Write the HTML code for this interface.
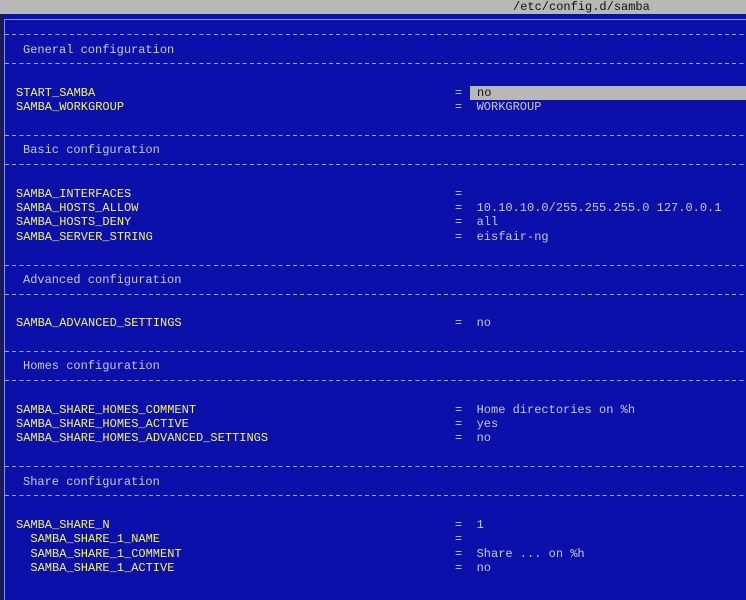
<!DOCTYPE html>
<html><head><meta charset="utf-8"><style>
html,body{margin:0;padding:0}
body{width:746px;height:600px;background:#0c10aa;position:relative;overflow:hidden;font-family:"Liberation Mono",monospace;font-size:12px}
.top{position:absolute;left:0;top:0;width:746px;height:14px;background:#b8b8b8}
.lb{position:absolute;left:0;top:14px;width:2px;height:586px;background:#202030}
.fv{position:absolute;left:4px;top:19px;width:1px;height:581px;background:#8890d8}
.fh{position:absolute;left:4px;top:19px;width:742px;height:1px;background:#8890d8}
.t{position:absolute;white-space:pre;line-height:14.4px;height:14.4px;margin-top:1px}
.y{color:#f4f468}.w{color:#c8c8d0}.k{color:#101010}
.d{position:absolute;left:5px;width:741px;height:1px;background:repeating-linear-gradient(90deg,#a0a4dc 0 4px,transparent 4px 7.2px)}
.hl{position:absolute;left:470px;width:276px;height:14.4px;background:#b8b8b8}
</style></head><body>
<div class="top"></div>
<div class="t k" style="left:513px;top:-1.5px">/etc/config.d/samba</div>
<div class="lb"></div><div class="fv"></div><div class="fh"></div>
<div class="hl" style="top:85.5px"></div>
<div class="d" style="top:34px"></div>
<div class="d" style="top:63px"></div>
<div class="d" style="top:135px"></div>
<div class="d" style="top:164px"></div>
<div class="d" style="top:265px"></div>
<div class="d" style="top:294px"></div>
<div class="d" style="top:351px"></div>
<div class="d" style="top:380px"></div>
<div class="d" style="top:466px"></div>
<div class="d" style="top:495px"></div>
<div class="t w" style="left:23px;top:41.6px">General configuration</div>
<div class="t w" style="left:23px;top:142.4px">Basic configuration</div>
<div class="t w" style="left:23px;top:272px">Advanced configuration</div>
<div class="t w" style="left:23px;top:358.4px">Homes configuration</div>
<div class="t w" style="left:23px;top:473.6px">Share configuration</div>

<div class="t y" style="left:16px;top:84.8px">START_SAMBA</div>
<div class="t y" style="left:16px;top:99.2px">SAMBA_WORKGROUP</div>
<div class="t y" style="left:16px;top:185.6px">SAMBA_INTERFACES</div>
<div class="t y" style="left:16px;top:200px">SAMBA_HOSTS_ALLOW</div>
<div class="t y" style="left:16px;top:214.4px">SAMBA_HOSTS_DENY</div>
<div class="t y" style="left:16px;top:228.8px">SAMBA_SERVER_STRING</div>
<div class="t y" style="left:16px;top:315.2px">SAMBA_ADVANCED_SETTINGS</div>
<div class="t y" style="left:16px;top:401.6px">SAMBA_SHARE_HOMES_COMMENT</div>
<div class="t y" style="left:16px;top:416px">SAMBA_SHARE_HOMES_ACTIVE</div>
<div class="t y" style="left:16px;top:430.4px">SAMBA_SHARE_HOMES_ADVANCED_SETTINGS</div>
<div class="t y" style="left:16px;top:516.8px">SAMBA_SHARE_N</div>
<div class="t y" style="left:30.4px;top:531.2px">SAMBA_SHARE_1_NAME</div>
<div class="t y" style="left:30.4px;top:545.6px">SAMBA_SHARE_1_COMMENT</div>
<div class="t y" style="left:30.4px;top:560px">SAMBA_SHARE_1_ACTIVE</div>

<div class="t w" style="left:455px;top:84.8px">=</div><div class="t k" style="left:477px;top:84.8px">no</div>
<div class="t w" style="left:455px;top:99.2px">=  WORKGROUP</div>
<div class="t w" style="left:455px;top:185.6px">=</div>
<div class="t w" style="left:455px;top:200px">=  10.10.10.0/255.255.255.0 127.0.0.1</div>
<div class="t w" style="left:455px;top:214.4px">=  all</div>
<div class="t w" style="left:455px;top:228.8px">=  eisfair-ng</div>
<div class="t w" style="left:455px;top:315.2px">=  no</div>
<div class="t w" style="left:455px;top:401.6px">=  Home directories on %h</div>
<div class="t w" style="left:455px;top:416px">=  yes</div>
<div class="t w" style="left:455px;top:430.4px">=  no</div>
<div class="t w" style="left:455px;top:516.8px">=  1</div>
<div class="t w" style="left:455px;top:531.2px">=</div>
<div class="t w" style="left:455px;top:545.6px">=  Share ... on %h</div>
<div class="t w" style="left:455px;top:560px">=  no</div>
</body></html>
